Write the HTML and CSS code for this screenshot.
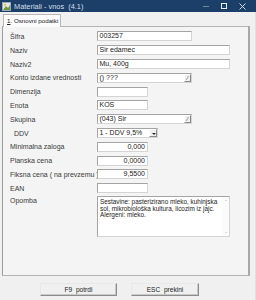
FILE: index.html
```html
<!DOCTYPE html>
<html>
<head>
<meta charset="utf-8">
<link rel="stylesheet" href="styles.css">
</head>
<body>
<div class="window">
  <div class="titlebar">
    <svg class="appicon" width="9" height="9" viewBox="0 0 9 9">
      <rect x="0.5" y="0.5" width="8" height="8" fill="#e8e8e8" stroke="#9aa7b4"/>
      <path d="M1 8 L4 4 L6 6 L8 3 L8 8 Z" fill="#6f9a3a"/>
      <circle cx="3" cy="2.8" r="1" fill="#e0b030"/>
    </svg>
    <span class="title">Materiali - vnos&nbsp; (4.1)</span>
    <span class="spacer"></span>
    <span class="ctl min"></span>
    <span class="ctl max"></span>
    <svg class="ctl close" width="7" height="7" viewBox="0 0 7 7"><path d="M0.5 0.5 L6.5 6.5 M6.5 0.5 L0.5 6.5" stroke="#e6ecf2" stroke-width="0.9"/></svg>
  </div>
  <div class="body">
    <div class="tabs">
      <div class="tab"><u>1</u>. Osnovni podatki</div>
    </div>
    <div class="page">
      <div class="form">
        <label>Šifra</label><div class="field"><span class="inp w95">003257</span></div>
        <label>Naziv</label><div class="field"><span class="inp w133">Sir edamec</span></div>
        <label>Naziv2</label><div class="field"><span class="inp w133">Mu, 400g</span></div>
        <label>Konto izdane vrednosti</label><div class="field"><span class="inp w95 lookup">() ???<span class="lbtn">&#x2044;</span></span></div>
        <label>Dimenzija</label><div class="field"><span class="inp w51"></span></div>
        <label>Enota</label><div class="field"><span class="inp w51">KOS</span></div>
        <label>Skupina</label><div class="field"><span class="inp w95 lookup">(043) Sir<span class="lbtn">&#x2044;</span></span></div>
        <label class="ind">DDV</label><div class="field"><span class="inp w60 sel">1 - DDV 9,5%<span class="arrow"></span></span></div>
        <label>Minimalna zaloga</label><div class="field"><span class="inp w51 num">0,000</span></div>
        <label>Planska cena</label><div class="field"><span class="inp w51 num">0,0000</span></div>
        <label>Fiksna cena ( na prevzemu )</label><div class="field"><span class="inp w51 num">9,5500</span></div>
        <label>EAN</label><div class="field"><span class="inp w51"></span></div>
        <label class="top">Opomba</label>
        <div class="field memo-f">
          <div class="memo">
            <div class="memo-text">Sestavine: pasterizirano mleko, kuhinjska sol, mikrobiološka kultura, licozim iz jajc. Alergeni: mleko.</div>
            <div class="vscroll"><span class="up"></span><span class="dn"></span></div>
          </div>
        </div>
      </div>
    </div>
    <div class="footer">
      <div class="btn">F9&nbsp; potrdi</div>
      <div class="btn">ESC&nbsp; prekini</div>
    </div>
  </div>
</div>
</body>
</html>
```
FILE: styles.css
```css
* { box-sizing: border-box; }
html, body { margin: 0; padding: 0; }
body {
  width: 256px;
  height: 300px;
  overflow: hidden;
  background: #f0f0f0;
  font-family: "Liberation Sans", Arial, sans-serif;
  font-size: 7px;
  color: #2a2a2a;
}
.window {
  width: 256px;
  height: 300px;
  display: flex;
  flex-direction: column;
  background: #f0f0f0;
}
.titlebar {
  height: 12px;
  background: #1b3f69;
  display: flex;
  align-items: center;
  padding-left: 2px;
  color: #dfe6ee;
}
.appicon { margin-right: 3px; }
.title { font-size: 7.4px; color: #d6dfe9; white-space: nowrap; }
.spacer { flex: 1; }
.ctl { display: block; }
.min { width: 6px; height: 1px; background: #c8d2dc; margin-right: 12px; opacity: .5; }
.max { width: 6px; height: 6px; border: 1px solid #e6ecf2; margin-right: 12px; }
.close { margin-right: 10px; }
.body {
  flex: 1;
  display: flex;
  flex-direction: column;
  padding: 1px 5px 0 2px;
  border-right: 1px solid #e0e0e0;
}
.tabs {
  height: 13px;
  display: flex;
  align-items: flex-end;
  padding-left: 1px;
}
.tab {
  height: 13px;
  padding: 0 2px 0 3px;
  white-space: nowrap;
  background: #fbfbfb;
  border: 1px solid #b8b8b8;
  border-bottom: none;
  line-height: 11px;
  font-size: 6.2px;
  color: #222;
  position: relative;
  top: 1px;
  z-index: 1;
}
.tab u { text-decoration: underline; }
.page {
  height: 250px;
  border: 1px solid #b4b4b4;
  border-left-color: #9c9c9c;
  border-right: 2px solid #a8a8a8;
  background: #f4f4f4;
  padding: 2.6px 0 0 7px;
}
.form {
  display: grid;
  grid-template-columns: 87px 1fr;
  grid-auto-rows: 13.8px;
}
.form label {
  display: flex;
  align-items: center;
  white-space: nowrap;
  color: #3a3a3a;
}
.form label.ind { padding-left: 4px; }
.form label.top { align-items: flex-start; padding-top: 2px; }
.field { display: flex; align-items: center; }
.inp {
  height: 10px;
  background: #fff;
  border: 1px solid;
  border-color: #a4a4a4 #d4d4d4 #d4d4d4 #a4a4a4;
  line-height: 8px;
  padding: 0 2px 0 1.5px;
  white-space: nowrap;
  overflow: hidden;
  color: #222;
  position: relative;
}
.w95 { width: 95px; }
.w133 { width: 133px; }
.w51 { width: 51px; }
.w60 { width: 61px; }
.num { text-align: right; padding-right: 2px; }
.lbtn {
  position: absolute;
  right: 0;
  top: 0;
  width: 7px;
  height: 8px;
  border: 1px solid;
  border-color: #fff #8a8a8a #8a8a8a #fff;
  background: #f0f0f0;
  font-size: 6px;
  line-height: 6px;
  text-align: center;
  color: #333;
}
.sel { padding-right: 9px; }
.arrow {
  position: absolute;
  right: 0;
  top: 0;
  width: 8px;
  height: 8px;
  background: #f0f0f0;
  border: 1px solid;
  border-color: #fff #8a8a8a #8a8a8a #fff;
}
.arrow::after {
  content: "";
  position: absolute;
  left: 1.5px;
  top: 2.5px;
  border-left: 2px solid transparent;
  border-right: 2px solid transparent;
  border-top: 2px solid #222;
}
.memo-f { grid-row: span 3; align-items: flex-start; padding-top: 1px; }
.memo {
  width: 133px;
  height: 41px;
  background: #fff;
  border: 1px solid;
  border-color: #a4a4a4 #d4d4d4 #d4d4d4 #a4a4a4;
  display: flex;
}
.memo-text {
  flex: 1;
  padding: 2px 2px 0 2px;
  font-size: 6.4px;
  line-height: 6.6px;
  color: #222;
}
.vscroll {
  width: 7px;
  display: flex;
  flex-direction: column;
  justify-content: space-between;
  align-items: center;
  padding: 3px 0;
  background: #fbfbfb;
}
.vscroll span {
  display: block;
  border-left: 1.5px solid transparent;
  border-right: 1.5px solid transparent;
}
.vscroll .up { border-bottom: 1.5px solid #b8b8b8; }
.vscroll .dn { border-top: 1.5px solid #b8b8b8; }
.footer {
  flex: 1;
  display: flex;
  align-items: center;
  padding: 3px 0 0 38px;
  gap: 14px;
}
.btn {
  width: 77px;
  height: 13px;
  background: #f0f0f0;
  border: 1px solid;
  border-color: #e8e8e8 #8c8c8c #8c8c8c #e8e8e8;
  box-shadow: inset -1px -1px 0 #c8c8c8;
  display: flex;
  align-items: center;
  justify-content: center;
  font-size: 6.6px;
  color: #222;
}
.btn + .btn { width: 68px; }
```
